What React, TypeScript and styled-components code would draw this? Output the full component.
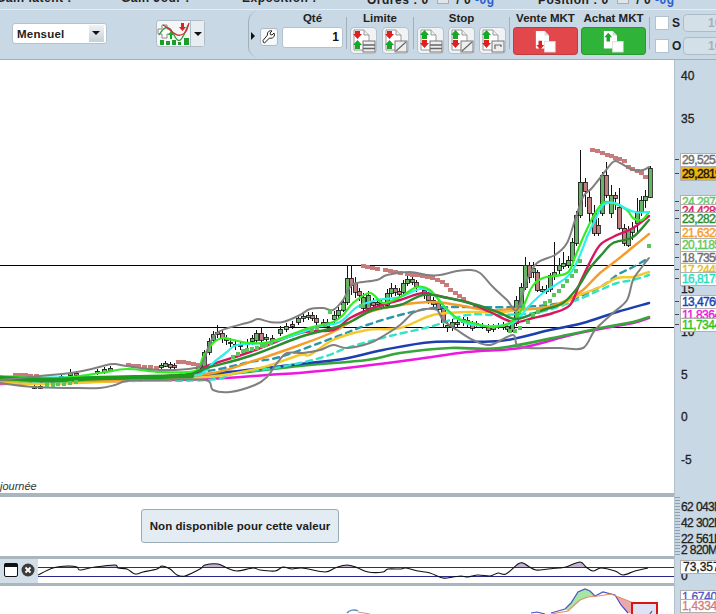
import React from "react";
import styled, { createGlobalStyle } from "styled-components";

type Pt = [number, number];

const GlobalStyle = createGlobalStyle`
  html, body {
    margin: 0;
    padding: 0;
    width: 716px;
    height: 614px;
    overflow: hidden;
    background: #c8d8e4;
    font-family: "Liberation Sans", Arial, sans-serif;
  }
`;

// chart data, in page pixels so the svg viewBox can stay simple
const candles: [number, number, number, number, number, number][] = [
  [5, 378, 380, 376, 382, 0], [34, 386, 388, 385, 389, 1], [40, 386, 388, 385, 389, 1],
  [61, 376, 378, 374, 380, 1], [70, 373, 375, 369, 378, 1], [76, 373, 375, 371, 377, 0],
  [97, 371, 373, 369, 375, 1], [104, 369, 372, 367, 374, 1], [110, 368, 370, 366, 372, 1],
  [161, 365, 367, 363, 369, 1], [165, 363, 366, 361, 367, 1], [170, 364, 367, 362, 369, 0],
  [174, 365, 367, 363, 369, 0], [198, 366, 370, 364, 372, 1], [200, 366, 367, 362, 369, 1],
  [204, 352, 367, 350, 370, 1], [209, 341, 352, 338, 355, 1], [213, 334, 340, 331, 343, 1],
  [217, 332, 334, 325, 338, 1], [222, 333, 338, 330, 343, 0], [226, 338, 340, 335, 345, 0],
  [230, 342, 343, 338, 347, 1], [235, 344, 345, 341, 350, 1], [240, 345, 346, 342, 350, 0],
  [247, 342, 344, 339, 348, 1], [252, 338, 341, 335, 345, 1], [256, 333, 340, 330, 343, 1],
  [261, 333, 340, 328, 343, 0], [266, 337, 339, 334, 342, 1], [272, 338, 340, 335, 342, 0],
  [280, 329, 333, 326, 336, 1], [286, 326, 329, 323, 332, 1], [292, 324, 326, 321, 329, 0],
  [298, 318, 322, 316, 325, 1], [303, 316, 318, 313, 322, 1], [308, 315, 317, 312, 320, 1],
  [312, 315, 318, 312, 321, 0], [316, 318, 322, 315, 325, 0], [323, 322, 325, 319, 328, 0],
  [327, 322, 326, 319, 329, 0], [334, 315, 319, 311, 323, 1], [338, 310, 315, 307, 318, 1],
  [343, 302, 310, 298, 312, 1], [347, 278, 302, 265, 305, 1], [351, 278, 285, 265, 295, 0],
  [355, 283, 292, 277, 298, 0], [359, 291, 295, 288, 301, 0], [363, 297, 308, 293, 312, 1],
  [368, 295, 308, 291, 311, 1], [373, 302, 305, 298, 309, 0], [377, 302, 304, 299, 306, 1],
  [381, 303, 307, 300, 310, 0], [387, 293, 305, 289, 307, 1], [391, 288, 293, 283, 297, 1],
  [395, 288, 292, 285, 296, 0], [399, 291, 294, 288, 298, 0], [403, 283, 292, 280, 295, 1],
  [407, 279, 283, 276, 286, 1], [412, 279, 282, 276, 285, 1], [416, 282, 286, 280, 292, 0],
  [424, 290, 295, 287, 299, 0], [428, 295, 300, 292, 304, 0], [433, 300, 304, 297, 307, 0],
  [438, 303, 309, 300, 312, 0], [443, 308, 322, 305, 328, 0], [447, 325, 327, 322, 332, 1],
  [452, 322, 326, 319, 331, 1], [457, 322, 324, 319, 328, 1], [463, 319, 322, 317, 326, 1],
  [467, 320, 323, 317, 327, 0], [472, 324, 328, 321, 331, 0], [476, 323, 325, 321, 328, 1],
  [482, 325, 326, 323, 329, 0], [488, 327, 330, 324, 333, 0], [493, 327, 329, 324, 332, 1],
  [498, 326, 327, 323, 329, 1], [503, 325, 327, 322, 330, 0], [507, 326, 329, 323, 332, 1],
  [512, 323, 330, 320, 332, 1], [516, 300, 323, 296, 326, 1], [521, 287, 307, 283, 309, 1],
  [525, 265, 287, 257, 290, 1], [529, 265, 277, 262, 283, 0], [533, 268, 272, 262, 278, 1],
  [537, 272, 290, 270, 292, 0], [542, 289, 291, 286, 294, 1], [546, 289, 291, 285, 294, 1],
  [550, 275, 289, 273, 292, 1], [554, 272, 276, 242, 280, 1], [559, 265, 270, 258, 274, 1],
  [563, 263, 266, 252, 269, 1], [568, 260, 265, 256, 268, 1], [572, 242, 260, 238, 262, 1],
  [576, 215, 243, 211, 246, 1], [580, 182, 215, 150, 218, 1], [585, 182, 191, 178, 207, 0],
  [589, 197, 213, 190, 222, 0], [594, 213, 233, 205, 236, 0], [598, 225, 233, 218, 236, 0],
  [602, 175, 213, 172, 216, 1], [606, 175, 195, 162, 198, 0], [611, 195, 213, 185, 218, 1],
  [615, 195, 198, 192, 210, 0], [619, 207, 228, 188, 230, 0], [624, 228, 243, 224, 246, 0],
  [628, 230, 245, 226, 247, 1], [632, 228, 232, 222, 240, 1], [637, 211, 223, 198, 232, 1],
  [641, 200, 211, 196, 216, 1], [645, 196, 200, 190, 208, 1], [650, 168, 197, 166, 198, 1],
];

const roseDots: Pt[] = [
  [15, 375], [20, 375], [25, 375], [30, 376], [36, 376],
  [128, 365], [133, 366], [138, 366], [144, 367], [150, 367], [156, 368],
  [178, 362], [183, 362], [188, 363], [193, 364], [198, 365],
  [363, 266], [367, 267], [372, 268], [377, 269], [385, 270], [390, 271], [395, 272], [400, 273], [407, 274],
  [412, 275], [417, 275], [422, 276], [427, 277], [432, 278], [437, 280], [442, 282], [446, 285], [450, 290], [455, 293],
  [459, 296], [463, 299], [592, 150], [597, 151], [602, 153], [607, 155], [611, 156], [615, 158], [619, 159], [624, 161],
  [628, 167], [632, 169], [637, 171], [641, 173], [645, 177],
];

const greenDots: Pt[] = [
  [47, 385], [53, 385], [58, 384], [64, 384], [70, 383], [76, 382],
  [233, 357], [238, 354], [243, 351], [247, 350], [252, 349], [257, 348], [262, 346], [266, 345], [271, 343],
  [312, 330], [317, 328], [325, 325], [330, 312], [343, 307], [361, 306],
  [510, 331], [515, 331], [520, 328], [528, 322], [533, 315], [538, 312], [545, 303], [550, 301], [554, 295],
  [559, 291], [563, 286], [567, 281], [572, 276], [576, 271], [580, 261], [649, 246],
];

type Series = { color: string; width: number; dash?: string; points: Pt[] };

const series: Series[] = [
  {
    color: "#ef17e0", width: 2.5,
    points: [[0, 384], [123, 381], [207, 379], [267, 375], [320, 371], [410, 360], [467, 352], [520, 348], [567, 336], [600, 329], [633, 323], [649, 318]],
  },
  {
    color: "#35a638", width: 2.6,
    points: [[0, 382], [120, 380], [207, 376], [300, 366], [367, 360], [400, 353], [450, 348], [500, 348], [567, 335], [600, 328], [633, 322], [649, 317]],
  },
  {
    color: "#1c3fb0", width: 2.5,
    points: [[0, 381], [120, 379], [207, 374], [300, 364], [343, 359], [383, 350], [433, 342], [500, 341], [550, 330], [583, 323], [617, 312], [649, 303]],
  },
  {
    color: "#2fe6c4", width: 2.4, dash: "6 5",
    points: [[0, 382], [120, 381], [207, 380], [237, 373], [280, 367], [320, 358], [350, 347], [390, 336], [433, 326], [467, 315], [500, 315], [540, 312], [577, 300], [600, 290], [617, 283], [633, 280], [649, 275]],
  },
  {
    color: "#2a97a8", width: 2.4, dash: "6 5",
    points: [[0, 381], [120, 380], [207, 371], [250, 362], [280, 357], [333, 338], [367, 325], [400, 315], [433, 308], [467, 307], [515, 307], [560, 303], [600, 287], [617, 275], [633, 267], [649, 258]],
  },
  {
    color: "#f5c92a", width: 2.4,
    points: [[0, 383], [50, 384], [120, 381], [207, 377], [260, 368], [300, 355], [310, 355], [333, 340], [367, 330], [400, 328], [433, 315], [467, 312], [500, 312], [540, 308], [560, 305], [580, 295], [600, 287], [617, 278], [633, 277], [649, 272]],
  },
  {
    color: "#f59d2a", width: 2.4,
    points: [[0, 381], [120, 380], [207, 374], [250, 362], [300, 345], [333, 332], [367, 313], [400, 305], [433, 302], [457, 305], [487, 310], [513, 309], [543, 308], [567, 300], [583, 290], [600, 273], [617, 260], [633, 247], [649, 234]],
  },
  {
    color: "#d8185e", width: 2.4,
    points: [[0, 379], [120, 378], [190, 374], [207, 366], [250, 352], [300, 333], [333, 330], [350, 318], [373, 308], [400, 300], [423, 293], [443, 297], [467, 302], [490, 312], [513, 322], [533, 318], [553, 313], [570, 305], [580, 283], [590, 262], [600, 245], [613, 237], [633, 228], [649, 216]],
  },
  {
    color: "#2cf0f0", width: 2.2,
    points: [[0, 378], [120, 377], [190, 376], [204, 372], [213, 363], [227, 352], [237, 345], [270, 342], [300, 333], [317, 327], [340, 322], [357, 307], [377, 300], [400, 297], [420, 289], [433, 293], [447, 310], [463, 322], [487, 326], [513, 323], [528, 307], [543, 293], [567, 277], [577, 262], [587, 237]],
  },
  {
    color: "#33ee22", width: 2.2,
    points: [[0, 376], [60, 378], [100, 373], [127, 369], [160, 372], [195, 371], [203, 357], [213, 343], [223, 338], [233, 340], [250, 343], [270, 342], [303, 330], [313, 327], [333, 322], [343, 315], [353, 303], [370, 293], [383, 303], [400, 297], [417, 287], [430, 290], [443, 305], [457, 318], [473, 323], [493, 327], [513, 321], [523, 307], [532, 287], [543, 278], [567, 273], [575, 257], [582, 240], [593, 217], [603, 203], [613, 203], [627, 210], [633, 218], [642, 220], [649, 212]],
  },
  {
    color: "#2cf0f0", width: 2.2,
    points: [[587, 237], [595, 220], [603, 205], [615, 203], [625, 208], [635, 212], [649, 212]],
  },
  {
    color: "#2a8c2f", width: 2.4,
    points: [[190, 375], [207, 368], [250, 356], [300, 337], [333, 328], [350, 322], [373, 310], [400, 305], [423, 295], [443, 297], [477, 305], [500, 313], [517, 319], [543, 310], [563, 303], [578, 287], [590, 268], [603, 253], [613, 243], [633, 237], [649, 220]],
  },
  {
    color: "#1c9c1c", width: 4.5,
    points: [[0, 378], [50, 380], [100, 378], [150, 377], [192, 376]],
  },
  {
    color: "#808080", width: 2,
    points: [[0, 380], [40, 376], [77, 372], [107, 365], [115, 364], [127, 366], [160, 370], [195, 368], [203, 362], [210, 343], [217, 333], [228, 328], [250, 322], [258, 319], [270, 322], [283, 322], [300, 315], [310, 309], [323, 308], [333, 310], [343, 300], [350, 287], [357, 283], [377, 280], [387, 275], [410, 272], [427, 275], [440, 275], [457, 271], [470, 270], [480, 273], [493, 287], [507, 300], [517, 310], [527, 280], [537, 263], [555, 255], [567, 243], [575, 220], [583, 197], [592, 188], [600, 178], [613, 162], [620, 163], [633, 170], [643, 170], [649, 167]],
  },
  {
    color: "#808080", width: 2,
    points: [[0, 383], [33, 387], [73, 388], [100, 388], [115, 385], [127, 381], [157, 380], [205, 380], [213, 390], [230, 392], [255, 385], [267, 377], [277, 363], [287, 353], [303, 353], [320, 350], [333, 345], [347, 348], [370, 343], [385, 335], [400, 325], [413, 313], [425, 309], [437, 310], [443, 320], [457, 330], [473, 340], [490, 345], [513, 335], [520, 347], [560, 348], [583, 348], [595, 330], [613, 313], [627, 300], [633, 280], [642, 267], [649, 258]],
  },
];

const rsi: Pt[] = [
  [38, 575], [53, 568], [68, 566], [77, 567], [80, 570], [95, 567], [115, 565], [118, 568], [127, 569], [135, 574],
  [143, 572], [157, 569], [162, 566], [170, 569], [177, 575], [185, 576], [200, 569], [205, 565], [218, 564], [227, 568],
  [237, 571], [253, 568], [260, 570], [275, 571], [283, 567], [292, 569], [302, 568], [325, 572], [335, 568], [347, 565],
  [358, 568], [368, 572], [383, 572], [388, 569], [401, 569], [406, 568], [418, 571], [430, 573], [443, 578], [453, 577],
  [461, 576], [468, 577], [478, 575], [490, 576], [498, 573], [506, 574], [518, 564], [523, 563], [528, 566], [536, 570],
  [548, 569], [558, 568], [566, 567], [580, 562], [586, 567], [593, 571], [601, 568], [615, 571], [623, 575], [635, 571], [648, 568],
];

const smooth = (pts: Pt[]) => {
  let d = `M${pts[0][0]} ${pts[0][1]}`;
  for (let i = 0; i < pts.length - 1; i++) {
    const p0 = pts[Math.max(i - 1, 0)];
    const p1 = pts[i];
    const p2 = pts[i + 1];
    const p3 = pts[Math.min(i + 2, pts.length - 1)];
    const c1x = p1[0] + (p2[0] - p0[0]) / 6;
    const c1y = p1[1] + (p2[1] - p0[1]) / 6;
    const c2x = p2[0] - (p3[0] - p1[0]) / 6;
    const c2y = p2[1] - (p3[1] - p1[1]) / 6;
    d += `C${c1x.toFixed(1)} ${c1y.toFixed(1)} ${c2x.toFixed(1)} ${c2y.toFixed(1)} ${p2[0]} ${p2[1]}`;
  }
  return d;
};

const priceTicks = [
  { y: 76, text: "40" }, { y: 119, text: "35" }, { y: 289, text: "15" },
  { y: 332, text: "10" }, { y: 375, text: "5" }, { y: 417, text: "0" }, { y: 460, text: "-5" },
];

const priceTags = [
  { y: 160, text: "29,5253", color: "#6e6e6e", bg: "#fff" },
  { y: 174, text: "29,2819", color: "#111", bg: "#eeb30c" },
  { y: 202, text: "24,2874", color: "#62c85a", bg: "#fff" },
  { y: 211, text: "24,4289", color: "#d8185e", bg: "#fff" },
  { y: 219, text: "23,2828", color: "#2a8c2f", bg: "#fff" },
  { y: 233, text: "21,6328", color: "#f59d2a", bg: "#fff" },
  { y: 245, text: "20,1185", color: "#62c85a", bg: "#fff" },
  { y: 258, text: "18,7350", color: "#6e6e6e", bg: "#fff" },
  { y: 270, text: "17,2445", color: "#e8c020", bg: "#fff" },
  { y: 279, text: "16,8175", color: "#1fe0c0", bg: "#fff" },
  { y: 302, text: "13,4760", color: "#1c3fb0", bg: "#fff" },
  { y: 315, text: "11,8364", color: "#ef17e0", bg: "#fff" },
  { y: 325, text: "11,7344", color: "#2fc51f", bg: "#fff" },
];

const SheetIcon = ({ mode, overlay }: { mode: "limit" | "stop"; overlay: "lines" | "slash" | "tab" }) => {
  const top = mode === "limit" ? "#e02020" : "#18a828";
  const bottom = mode === "limit" ? "#18a828" : "#e02020";
  return (
    <svg width="24" height="24" viewBox="0 0 24 24">
      <path d="M2 1h10l5 5v15H2z" fill="#fff" stroke="#999" />
      <path d="M12 1v5h5" fill="#eee" stroke="#999" />
      <path d={mode === "limit" ? "M3 2h5v3h2l-4.500 5L1 5h2z" : "M5.500 1l4.500 5H8v4H3V6H1z"} fill={top} />
      <path d={mode === "limit" ? "M5.500 11l4.500 5H8v4H3v-4H1z" : "M3 11h5v3h2l-4.500 5L1 14h2z"} fill={bottom} />
      <rect x="11" y="12" width="12" height="11" fill="#eee" stroke="#777" />
      {overlay === "lines" && <path d="M11 16h12M11 19.500h12" stroke="#666" strokeWidth="1.400" />}
      {overlay === "slash" && <path d="M12 22l10-9" stroke="#666" strokeWidth="1.200" />}
      {overlay === "tab" && <path d="M14 20v-4h6v2M14 16h6" stroke="#666" strokeWidth="1.200" fill="none" />}
    </svg>
  );
};

const MarketIcon = ({ up }: { up: boolean }) => (
  <svg width="21" height="23" viewBox="0 0 24 26">
    <path d="M1 1h10l5 5v15H1z" fill="#fff" />
    <path d="M11 1v5h5z" fill="#d8d8d8" />
    <path
      d={up ? "M6 3l4.500 5H8v5H4V8H1.500z" : "M4 12h4v5h2.500L6 22l-4.500-5H4z"}
      fill={up ? "#18a828" : "#e02020"}
    />
    <rect x="11" y="13" width="12" height="12" fill="#fff" stroke="#ddd" />
  </svg>
);

const App = () => {
  return (
    <Page>
      <GlobalStyle />
      <StatusStrip>
        <StatusText $width={125} $shift={-4}>Gain latent : -</StatusText>
        <StatusText $width={121}>Gain Jour : -</StatusText>
        <StatusText $width={125}>Exposition : -</StatusText>
        <StatusText $width={171}>Ordres : 0 <Mini /> / 0 <Kg>-0g</Kg></StatusText>
        <StatusText $width={178}>Position : 0 <Mini /> / 0 <Kg>-0g</Kg></StatusText>
      </StatusStrip>

      <Toolbar>
        <PeriodSelect>
          <span>Mensuel</span>
          <SelectArrow />
        </PeriodSelect>

        <IndicatorButton>
          <svg width="34" height="25" viewBox="0 0 34 25">
            <path d="M1 8h4V4h5v4h4v5h-4v4H5v-4H1z" fill="#fff" stroke="#888" />
            <path d="M2 14c6-10 10-10 15 0s8 6 14-10" fill="none" stroke="#2f9c35" strokeWidth="1.300" />
            <path d="M6 4c8 4 12 12 18 10s6-6 8-12" fill="none" stroke="#d03030" strokeWidth="1.300" />
            <path d="M24 2h3v4h2l-3.500 4L22 6h2z" fill="#e02020" />
            <path d="M14 10l3 4h-2v4h-2v-4h-2z" fill="#1aa82c" />
            <path d="M3 19h4v5H3zM9 20h4v4H9zM15 19h4v5h-4zM21 21h3v3h-3zM27 17h5v7h-5z" fill="#1c9c28" />
          </svg>
          <DropPart><SelectTriangle /></DropPart>
        </IndicatorButton>

        <OrderPanel>
          <CollapseArrow />
          <WrenchButton>
            <svg width="14" height="14" viewBox="0 0 14 14">
              <path d="M1.500 12.500l1 .5 5-5c2 .8 4.500-.2 5-3l-.5-2-2 2-1.500-.3-.5-1.700 2-2c-3-.8-5 1.200-4.500 4L1 10.500z" fill="#fff" stroke="#222" strokeWidth="1" />
            </svg>
          </WrenchButton>
          <Group $width={61}>
            <GroupTitle>Qté</GroupTitle>
            <QtyInput>1</QtyInput>
          </Group>
          <VSep />
          <Group $width={60}>
            <GroupTitle>Limite</GroupTitle>
            <IconRow $gap={5}>
              <OrderButton><SheetIcon mode="limit" overlay="lines" /></OrderButton>
              <OrderButton><SheetIcon mode="limit" overlay="slash" /></OrderButton>
            </IconRow>
          </Group>
          <VSep />
          <Group $width={89}>
            <GroupTitle>Stop</GroupTitle>
            <IconRow $gap={4}>
              <OrderButton><SheetIcon mode="stop" overlay="lines" /></OrderButton>
              <OrderButton><SheetIcon mode="stop" overlay="slash" /></OrderButton>
              <OrderButton><SheetIcon mode="stop" overlay="tab" /></OrderButton>
            </IconRow>
          </Group>
          <VSep />
          <Group $width={133}>
            <MarketTitles>
              <GroupTitle>Vente MKT</GroupTitle>
              <GroupTitle>Achat MKT</GroupTitle>
            </MarketTitles>
            <IconRow $gap={3}>
              <MarketButton $bg="#e2474c"><MarketIcon up={false} /></MarketButton>
              <MarketButton $bg="#2fb339"><MarketIcon up /></MarketButton>
            </IconRow>
          </Group>
          <VSep />
          <OptionColumn>
            <OptionRow>
              <CheckBox />
              <OptionName>S</OptionName>
              <StepInput>10</StepInput>
            </OptionRow>
            <OptionRow>
              <CheckBox />
              <OptionName>O</OptionName>
              <StepInput>10</StepInput>
            </OptionRow>
          </OptionColumn>
        </OrderPanel>
      </Toolbar>

      <MainRow>
        <ChartPane>
          <ChartSvg viewBox="0 60 674 433" width="674" height="433">
            <line x1="0" x2="674" y1="265.500" y2="265.500" stroke="#000" />
            <line x1="0" x2="674" y1="327.500" y2="327.500" stroke="#000" />
            {candles.map(([x, top, bottom, hi, lo, up]) => (
              <g key={x} shapeRendering="crispEdges">
                <line x1={x} x2={x} y1={hi} y2={lo} stroke="#111" />
                <rect x={x - 2} y={top} width="4" height={bottom - top} fill={up ? "#66b566" : "#bf7f7f"} stroke="#111" strokeWidth="0.800" />
              </g>
            ))}
            {roseDots.map(([x, y]) => (
              <rect key={`${x}-${y}`} x={x - 2} y={y - 2} width="5" height="4" fill="#c77b7b" />
            ))}
            {series.map((s, i) => (
              <path key={i} d={smooth(s.points)} fill="none" stroke={s.color} strokeWidth={s.width} strokeDasharray={s.dash} strokeLinecap="round" />
            ))}
            {greenDots.map(([x, y]) => (
              <rect key={`${x}-${y}`} x={x - 2} y={y - 2} width="4" height="4" fill="#5cc45c" />
            ))}
          </ChartSvg>
          <Caption>journée</Caption>
        </ChartPane>
        <Axis>
          {priceTicks.map((t) => (
            <AxisNumber key={t.text} $top={t.y - 60}>{t.text}</AxisNumber>
          ))}
          {priceTags.map((t) => (
            <PriceTag key={t.text} $top={t.y - 60} $color={t.color} $bg={t.bg}>{t.text}</PriceTag>
          ))}
        </Axis>
      </MainRow>

      <VolumeRow>
        <VolumePane>
          <NoticeButton>Non disponible pour cette valeur</NoticeButton>
        </VolumePane>
        <Axis>
          <VolumeScale />
          <VolumeNumber>62 043M</VolumeNumber>
          <VolumeNumber>42 302M</VolumeNumber>
          <VolumeNumber>22 561M</VolumeNumber>
          <VolumeNumber $tight>2 820M</VolumeNumber>
        </Axis>
      </VolumeRow>

      <RsiRow>
        <RsiPane>
          <PaneTools>
            <svg width="14" height="14" viewBox="0 0 14 14">
              <rect x="0.500" y="0.500" width="13" height="13" rx="1.500" fill="#fff" stroke="#111" />
              <rect x="0.500" y="0.500" width="13" height="3.500" fill="#111" />
            </svg>
            <svg width="14" height="14" viewBox="0 0 14 14">
              <circle cx="7" cy="7" r="6.500" fill="#3c3c3c" />
              <path d="M4.500 4.500l5 5M9.500 4.500l-5 5" stroke="#fff" strokeWidth="1.800" />
            </svg>
          </PaneTools>
          <ChartSvg viewBox="38 559 636 24" width="636" height="24">
            <clipPath id="overbought"><rect x="38" y="559" width="636" height="8.500" /></clipPath>
            <path d={`${smooth(rsi)}V568H38z`} fill="#c6b2d6" clipPath="url(#overbought)" />
            <line x1="38" x2="674" y1="567.500" y2="567.500" stroke="#2a2a8c" />
            <line x1="38" x2="674" y1="576.500" y2="576.500" stroke="#2a2a8c" />
            <path d={smooth(rsi)} fill="none" stroke="#111" strokeWidth="1.100" />
          </ChartSvg>
        </RsiPane>
        <Axis>
          <AxisNumber $top={20}>0</AxisNumber>
          <RsiTag>73,357</RsiTag>
        </Axis>
      </RsiRow>

      <MacdRow>
        <MacdPane>
          <ChartSvg viewBox="0 586 674 28" width="674" height="28">
            <path d="M347 613c2-3 8-4 11-2" fill="none" stroke="#5a8fc0" strokeWidth="1.500" />
            <path d="M358 612l12 2" fill="none" stroke="#d09090" strokeWidth="1" />
            <path d="M565 609L571 603 578 592 585 589 590 591 595 596 588 597 580 600 568 611z" fill="#a5e6a5" />
            <path d="M603 592L615 595 621 605 628 613 641 614 631 602 621 598 611 594z" fill="#eba9ad" />
            <path d="M531 613L537 612 545 614M551 613L565 609 571 603 578 592 585 589 590 591 595 596 603 592 615 595 621 605 628 613" fill="none" stroke="#4a55c0" strokeWidth="1.200" />
            <path d="M551 614L568 611 580 600 588 597 598 596 611 594 621 598 631 602 641 608" fill="none" stroke="#e2906a" strokeWidth="1.200" />
          </ChartSvg>
          <AlertBox>
            <svg width="22" height="10" viewBox="0 0 22 10">
              <path d="M4 11L13 9 17 3" fill="none" stroke="#5a62c8" strokeWidth="1.300" />
            </svg>
          </AlertBox>
        </MacdPane>
        <Axis>
          <MacdTag $top={14} $color="#5156c4">1,6740</MacdTag>
          <MacdTag $top={23} $color="#d07c7c">1,4334</MacdTag>
        </Axis>
      </MacdRow>
    </Page>
  );
};

export default App;

const Page = styled.div`
  width: 716px;
  height: 614px;
  display: flex;
  flex-direction: column;
  overflow: hidden;
  background: #c8d8e4;
`;

const StatusStrip = styled.div`
  height: 9px;
  flex: none;
  display: flex;
  overflow: hidden;
  border-bottom: 1px solid #e7eef3;
  font-size: 12px;
  line-height: 12px;
`;

const StatusText = styled.div<{ $width: number; $shift?: number }>`
  flex: none;
  width: ${(p) => p.$width}px;
  margin-top: -8px;
  margin-left: ${(p) => p.$shift ?? 0}px;
  color: #222;
  font-weight: 700;
  letter-spacing: 0.5px;
  white-space: nowrap;
`;

const Mini = styled.span`
  display: inline-block;
  width: 10px;
  height: 10px;
  margin: 0 4px;
  background: #dfe6eb;
  border: 1px solid #aab;
`;

const Kg = styled.span`
  color: #2a5fd0;
`;

const Toolbar = styled.div`
  height: 49px;
  flex: none;
  display: flex;
  align-items: stretch;
  padding-left: 12px;
  background: #c8d8e4;
  border-bottom: 1px solid #a4b0b8;
`;

const PeriodSelect = styled.div`
  width: 95px;
  height: 21px;
  margin: 13px 49px 0 0;
  flex: none;
  box-sizing: border-box;
  display: flex;
  align-items: center;
  justify-content: space-between;
  padding: 0 2px 0 4px;
  background: #fff;
  border: 1px solid #b4c2cd;
  border-radius: 3px;
  font-size: 11.500px;
  font-weight: 700;
  letter-spacing: 0.200px;
  color: #222;
`;

const SelectArrow = styled.div`
  width: 15px;
  height: 17px;
  background: linear-gradient(#f0f3f5, #c6d0d8);
  position: relative;
  &::after {
    content: "";
    position: absolute;
    left: 3px;
    top: 6px;
    border-left: 4px solid transparent;
    border-right: 4px solid transparent;
    border-top: 4px solid #111;
  }
`;

const IndicatorButton = styled.div`
  width: 49px;
  height: 27px;
  margin: 10px 43px 0 0;
  flex: none;
  box-sizing: border-box;
  display: flex;
  align-items: center;
  background: #f4f6f8;
  border: 1px solid #b0bdc8;
  border-radius: 3px;
`;

const DropPart = styled.div`
  flex: 1;
  height: 100%;
  margin-left: -1px;
  display: flex;
  align-items: center;
  justify-content: center;
  background: #e8edf1;
  border-left: 1px solid #b0bdc8;
`;

const SelectTriangle = styled.div`
  border-left: 4px solid transparent;
  border-right: 4px solid transparent;
  border-top: 4px solid #111;
`;

const OrderPanel = styled.div`
  flex: 1;
  display: flex;
  align-items: stretch;
  padding-left: 2px;
  border-left: 1px solid #a4b0b8;
  border-top-left-radius: 10px;
  border-bottom-left-radius: 10px;
  margin-top: 1px;
  margin-bottom: 2px;
`;

const CollapseArrow = styled.div`
  width: 0;
  height: 0;
  align-self: center;
  margin: 4px 5px 0 0;
  border-top: 4px solid transparent;
  border-bottom: 4px solid transparent;
  border-left: 4px solid #111;
`;

const WrenchButton = styled.div`
  width: 18px;
  height: 18px;
  align-self: flex-start;
  margin: 17px 4px 0 0;
  box-sizing: border-box;
  display: flex;
  align-items: center;
  justify-content: center;
  background: #f6f8fa;
  border: 1px solid #aebbc6;
  border-radius: 3px;
`;

const Group = styled.div<{ $width: number }>`
  width: ${(p) => p.$width}px;
  flex: none;
  display: flex;
  flex-direction: column;
  align-items: flex-start;
`;

const GroupTitle = styled.div`
  width: 100%;
  height: 15px;
  line-height: 15px;
  text-align: center;
  font-size: 11.500px;
  font-weight: 700;
  color: #222;
  white-space: nowrap;
`;

const QtyInput = styled.div`
  width: 61px;
  height: 21px;
  box-sizing: border-box;
  line-height: 19px;
  padding-right: 3px;
  text-align: right;
  margin-top: 1px;
  background: #fff;
  border: 1px solid #b4c2cd;
  border-radius: 3px;
  font-size: 12px;
  font-weight: 700;
  color: #111;
`;

const VSep = styled.div`
  width: 1px;
  height: 32px;
  margin: 6px 3px 0;
  flex: none;
  background: #a4b0b8;
`;

const IconRow = styled.div<{ $gap: number }>`
  display: flex;
  gap: ${(p) => p.$gap}px;
  width: 100%;
  margin-top: 1px;
`;

const OrderButton = styled.div`
  width: 27px;
  height: 27px;
  flex: none;
  box-sizing: border-box;
  display: flex;
  align-items: center;
  justify-content: center;
  background: #f0f3f6;
  border: 1px solid #b4c0ca;
  border-radius: 4px;
`;

const MarketTitles = styled.div`
  display: flex;
  width: 100%;
  gap: 3px;
`;

const MarketButton = styled.div<{ $bg: string }>`
  width: 65px;
  height: 28px;
  flex: none;
  box-sizing: border-box;
  display: flex;
  align-items: center;
  justify-content: center;
  background: ${(p) => p.$bg};
  border: 1px solid rgba(0, 0, 0, 0.15);
  border-radius: 4px;
`;

const OptionColumn = styled.div`
  display: flex;
  flex-direction: column;
  gap: 5px;
  padding: 3px 0 0 2px;
`;

const OptionRow = styled.div`
  display: flex;
  align-items: center;
  height: 18px;
`;

const CheckBox = styled.div`
  width: 12px;
  height: 12px;
  flex: none;
  background: #fff;
  border: 1px solid #b4c2cd;
`;

const OptionName = styled.div`
  width: 14px;
  flex: none;
  padding-left: 3px;
  box-sizing: border-box;
  font-size: 12px;
  font-weight: 700;
  color: #222;
`;

const StepInput = styled.div`
  width: 40px;
  height: 18px;
  flex: none;
  box-sizing: border-box;
  padding-left: 24px;
  line-height: 16px;
  background: #d4e0e8;
  border: 1px solid #aebcc8;
  border-radius: 4px;
  color: #a4b0b8;
  font-size: 12px;
  font-weight: 700;
`;

const MainRow = styled.div`
  height: 433px;
  flex: none;
  display: flex;
`;

const ChartPane = styled.div`
  width: 674px;
  flex: none;
  position: relative;
  background: #fff;
  overflow: hidden;
`;

const ChartSvg = styled.svg`
  display: block;
  flex: none;
`;

const Caption = styled.div`
  position: absolute;
  left: 0;
  bottom: 0;
  font-size: 11px;
  line-height: 13px;
  font-style: italic;
  color: #333;
`;

const Axis = styled.div`
  flex: 1;
  position: relative;
  overflow: hidden;
  background: #c8d8e4;
  border-left: 1px solid #b4c0ca;
`;

const AxisNumber = styled.div<{ $top: number }>`
  position: absolute;
  left: 6px;
  top: ${(p) => p.$top - 7}px;
  line-height: 14px;
  font-size: 12px;
  -webkit-text-stroke: 0.3px #222;
  color: #222;
`;

const PriceTag = styled.div<{ $top: number; $color: string; $bg: string }>`
  position: absolute;
  left: 5px;
  top: ${(p) => p.$top - 7}px;
  width: 50px;
  height: 14px;
  box-sizing: border-box;
  padding-left: 1px;
  line-height: 13px;
  font-size: 12px;
  letter-spacing: -0.6px;
  -webkit-text-stroke: 0.4px ${(p) => p.$color};
  white-space: nowrap;
  color: ${(p) => p.$color};
  background: ${(p) => p.$bg};
  border: 1px solid #b0b0b0;
  &::before {
    content: "";
    position: absolute;
    left: -6px;
    top: 5px;
    width: 4px;
    height: 1px;
    background: #445;
  }
`;

const VolumeRow = styled.div`
  height: 63px;
  flex: none;
  display: flex;
`;

const VolumePane = styled.div`
  width: 674px;
  flex: none;
  box-sizing: border-box;
  padding: 12px 0 0 141px;
  background: #fff;
  border-top: 4px solid #a9b6bd;
`;

const NoticeButton = styled.div`
  width: 198px;
  height: 34px;
  box-sizing: border-box;
  line-height: 32px;
  text-align: center;
  background: #e3ebf3;
  border: 1px solid #9aabb8;
  border-radius: 3px;
  font-size: 11.500px;
  font-weight: 700;
  letter-spacing: 0.050px;
  color: #1c1c1c;
`;

const VolumeScale = styled.div`
  position: absolute;
  left: 0;
  top: 4px;
  width: 5px;
  height: 59px;
  background: repeating-linear-gradient(#8fa0ac 0 1px, transparent 1px 3px);
`;

const VolumeNumber = styled.div<{ $tight?: boolean }>`
  padding-left: 6px;
  margin-top: ${(p) => (p.$tight ? -3 : 2)}px;
  line-height: 14px;
  font-size: 12px;
  letter-spacing: -0.6px;
  -webkit-text-stroke: 0.3px #222;
  white-space: nowrap;
  color: #222;
  &:nth-child(2) {
    margin-top: 7px;
  }
`;

const RsiRow = styled.div`
  height: 27px;
  flex: none;
  display: flex;
`;

const RsiPane = styled.div`
  width: 674px;
  flex: none;
  display: flex;
  background: #fff;
  border-top: 3px solid #a9b6bd;
`;

const PaneTools = styled.div`
  width: 38px;
  flex: none;
  box-sizing: border-box;
  display: flex;
  align-items: center;
  gap: 3px;
  padding: 0 0 2px 4px;
  background: #d3dfe8;
`;

const RsiTag = styled.div`
  position: absolute;
  left: 5px;
  top: 4px;
  width: 50px;
  height: 14px;
  box-sizing: border-box;
  padding-left: 2px;
  line-height: 13px;
  font-size: 12px;
  -webkit-text-stroke: 0.3px #222;
  color: #222;
  background: #fff;
  border: 1px solid #b0b0b0;
`;

const MacdRow = styled.div`
  flex: 1;
  display: flex;
`;

const MacdPane = styled.div`
  width: 674px;
  flex: none;
  position: relative;
  background: #fff;
  border-top: 3px solid #a9b6bd;
`;

const AlertBox = styled.div`
  position: absolute;
  left: 631px;
  top: 16px;
  width: 27px;
  height: 14px;
  box-sizing: border-box;
  padding-left: 2px;
  background: #dde3f5;
  border: 2px solid #dc1414;
`;

const MacdTag = styled.div<{ $top: number; $color: string }>`
  position: absolute;
  left: 5px;
  top: ${(p) => p.$top - 7}px;
  width: 50px;
  height: 14px;
  box-sizing: border-box;
  padding-left: 1px;
  line-height: 13px;
  font-size: 12px;
  letter-spacing: -0.3px;
  -webkit-text-stroke: 0.3px ${(p) => p.$color};
  color: ${(p) => p.$color};
  background: #fff;
  border: 1px solid #b0b0b0;
`;
